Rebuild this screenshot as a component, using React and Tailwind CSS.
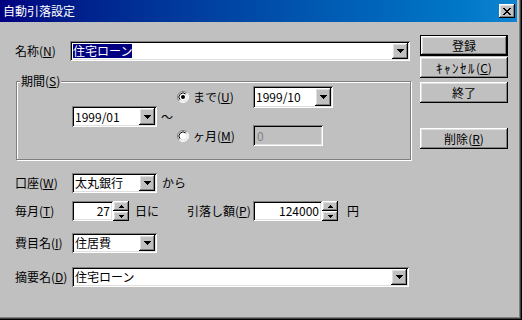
import React from "react";

const sunken =
  "shadow-[inset_1px_1px_0_#808080,inset_-1px_-1px_0_#ffffff,inset_2px_2px_0_#000000,inset_-2px_-2px_0_#dfdfdf]";
const raised =
  "shadow-[inset_-1px_-1px_0_#000000,inset_1px_1px_0_#ffffff,inset_-2px_-2px_0_#808080,inset_2px_2px_0_#dfdfdf]";

function Arrow() {
  return (
    <svg width="7" height="4" viewBox="0 0 7 4" shapeRendering="crispEdges">
      <path d="M0 0H7V1H6V2H5V3H4V4H3V3H2V2H1V1H0Z" fill="#000" />
    </svg>
  );
}

function UpArrow() {
  return (
    <svg width="5" height="3" viewBox="0 0 5 3" shapeRendering="crispEdges">
      <path d="M2 0H3V1H4V2H5V3H0V2H1V1H2Z" fill="#000" />
    </svg>
  );
}

function DownArrow() {
  return (
    <svg width="5" height="3" viewBox="0 0 5 3" shapeRendering="crispEdges">
      <path d="M0 0H5V1H4V2H3V3H2V2H1V1H0Z" fill="#000" />
    </svg>
  );
}

function CloseGlyph() {
  const rows = [
    "XX....XX",
    ".XX..XX.",
    "..XXXX..",
    "...XX...",
    "..XXXX..",
    ".XX..XX.",
    "XX....XX",
  ];
  return (
    <svg width="8" height="7" viewBox="0 0 8 7" shapeRendering="crispEdges">
      {rows.map((r, y) =>
        r.split("").map((c, x) =>
          c === "X" ? <rect key={`${x}-${y}`} x={x} y={y} width="1" height="1" fill="#000" /> : null
        )
      )}
    </svg>
  );
}

function Radio({ checked }) {
  const a = 3.89;
  return (
    <svg width="12" height="12" viewBox="0 0 12 12">
      <circle cx="6" cy="6" r="5" fill="#ffffff" />
      <path d={`M${6 - a} ${6 + a} A5.5 5.5 0 0 1 ${6 + a} ${6 - a}`} stroke="#808080" strokeWidth="1" fill="none" />
      <path d={`M${6 + a} ${6 - a} A5.5 5.5 0 0 1 ${6 - a} ${6 + a}`} stroke="#ffffff" strokeWidth="1" fill="none" />
      <path d="M3.17 8.83 A4 4 0 0 1 8.83 3.17" stroke="#000000" strokeWidth="1" fill="none" />
      <path d="M8.83 3.17 A4 4 0 0 1 3.17 8.83" stroke="#dfdfdf" strokeWidth="1" fill="none" />
      {checked ? <circle cx="6" cy="6" r="2" fill="#000" /> : null}
    </svg>
  );
}

function M({ t, k, tClass = "" }) {
  return (
    <span className="whitespace-nowrap">
      <span className={tClass}>{t}</span>(<span className="underline underline-offset-[1px]">{k}</span>)
    </span>
  );
}

function Combo({ text, selected, className }) {
  return (
    <div className={`flex bg-white p-[2px] ${sunken} ${className}`}>
      <div className="flex-1 flex items-center pl-[1px] overflow-hidden whitespace-nowrap">
        {selected ? <span className="bg-[#000080] text-white">{text}</span> : text}
      </div>
      <div className={`w-[16px] flex items-center justify-center bg-[#c0c0c0] ${raised}`}>
        <Arrow />
      </div>
    </div>
  );
}

function Spin({ value, className }) {
  return (
    <div className="flex h-full">
      <div className={`bg-white flex items-center justify-end pr-[3px] ${sunken} ${className}`}>{value}</div>
      <div className="flex flex-col w-[16px]">
        <div className={`flex-1 flex items-center justify-center bg-[#c0c0c0] ${raised}`}>
          <UpArrow />
        </div>
        <div className={`flex-1 flex items-center justify-center bg-[#c0c0c0] ${raised}`}>
          <DownArrow />
        </div>
      </div>
    </div>
  );
}

function Button({ children, def, className }) {
  return (
    <div
      className={`h-[21px] w-[88px] flex items-center justify-center bg-[#c0c0c0] ${
        def ? "border border-black" : ""
      } ${className}`}
    >
      <div className={`w-full h-full flex items-center justify-center ${raised}`}>{children}</div>
    </div>
  );
}

export default function App() {
  return (
    <div className="w-[522px] h-[320px] bg-[#c0c0c0] flex flex-col pr-[5px] pb-[3px] shadow-[inset_-1px_-1px_0_#000000,inset_-2px_-2px_0_#404040,inset_-3px_-3px_0_#808080] font-['Noto_Sans_CJK_JP',sans-serif] text-[12px] leading-[14px] text-black overflow-hidden">
      <div className="h-[22px] shrink-0 flex items-center justify-between pl-[3px] bg-linear-to-r from-[#000080] to-[#1084d0]">
        <span className="text-white">自動引落設定</span>
        <div className={`w-[16px] h-[14px] mr-[2px] flex items-center justify-center bg-[#c0c0c0] ${raised}`}>
          <CloseGlyph />
        </div>
      </div>

      <div className="flex flex-1">
        <div className="w-[412px] flex flex-col">
          <div className="mt-[19px] h-[20px] flex items-center pl-[15px]">
            <div className="w-[55px]">
              <M t="名称" k="N" />
            </div>
            <Combo text="住宅ローン" selected className="w-[340px] h-[20px]" />
          </div>

          <div className="relative mt-[20px] ml-[16px] w-[395px] h-[79px] border border-[#808080] shadow-[inset_1px_1px_0_#ffffff,1px_1px_0_#ffffff] flex items-start">
            <div className="absolute left-[3px] top-[-8px] px-[1px] bg-[#c0c0c0]">
              <M t="期間" k="S" />
            </div>
            <div className="flex items-center mt-[24px] ml-[55px]">
              <Combo text="1999/01" className="w-[85px] h-[21px]" />
              <div className="w-[20px] text-center">～</div>
            </div>
            <div className="flex flex-col pt-[4px] gap-[17px]">
              <div className="flex items-center h-[22px]">
                <div className="w-[76px] flex items-center gap-[4px]">
                  <Radio checked />
                  <M t="まで" k="U" />
                </div>
                <Combo text="1999/10" className="w-[80px] h-[22px]" />
              </div>
              <div className="flex items-center h-[21px]">
                <div className="w-[76px] flex items-center gap-[4px]">
                  <Radio />
                  <M t="ヶ月" k="M" />
                </div>
                <div className={`w-[70px] h-[21px] bg-[#c0c0c0] flex items-center pl-[4px] text-[#808080] ${sunken}`}>0</div>
              </div>
            </div>
          </div>

          <div className="mt-[13px] h-[20px] flex items-center pl-[15px]">
            <div className="w-[57px]">
              <M t="口座" k="W" />
            </div>
            <Combo text="太丸銀行" className="w-[85px] h-[20px]" />
            <span className="ml-[5px]">から</span>
          </div>

          <div className="mt-[8px] h-[20px] flex items-center pl-[15px]">
            <div className="w-[57px]">
              <M t="毎月" k="T" />
            </div>
            <Spin value="27" className="w-[41px]" />
            <span className="ml-[6px]">日に</span>
            <div className="ml-[28px] w-[66px]">
              <M t="引落し額" k="P" />
            </div>
            <Spin value="124000" className="w-[69px]" />
            <span className="ml-[9px]">円</span>
          </div>

          <div className="mt-[12px] h-[20px] flex items-center pl-[15px]">
            <div className="w-[57px]">
              <M t="費目名" k="I" />
            </div>
            <Combo text="住居費" className="w-[85px] h-[20px]" />
          </div>

          <div className="mt-[14px] h-[20px] flex items-center pl-[15px]">
            <div className="w-[57px]">
              <M t="摘要名" k="D" />
            </div>
            <Combo text="住宅ローン" className="w-[337px] h-[20px]" />
          </div>
        </div>

        <div className="ml-[8px] w-[88px] flex flex-col pt-[13px]">
          <Button def>登録</Button>
          <Button className="mt-[1px]">
            <M t="ｷｬﾝｾﾙ" k="C" tClass="text-[13px] tracking-[1.5px]" />
          </Button>
          <Button className="mt-[4px]">終了</Button>
          <Button className="mt-[25px]">
            <M t="削除" k="R" />
          </Button>
        </div>
      </div>
    </div>
  );
}
